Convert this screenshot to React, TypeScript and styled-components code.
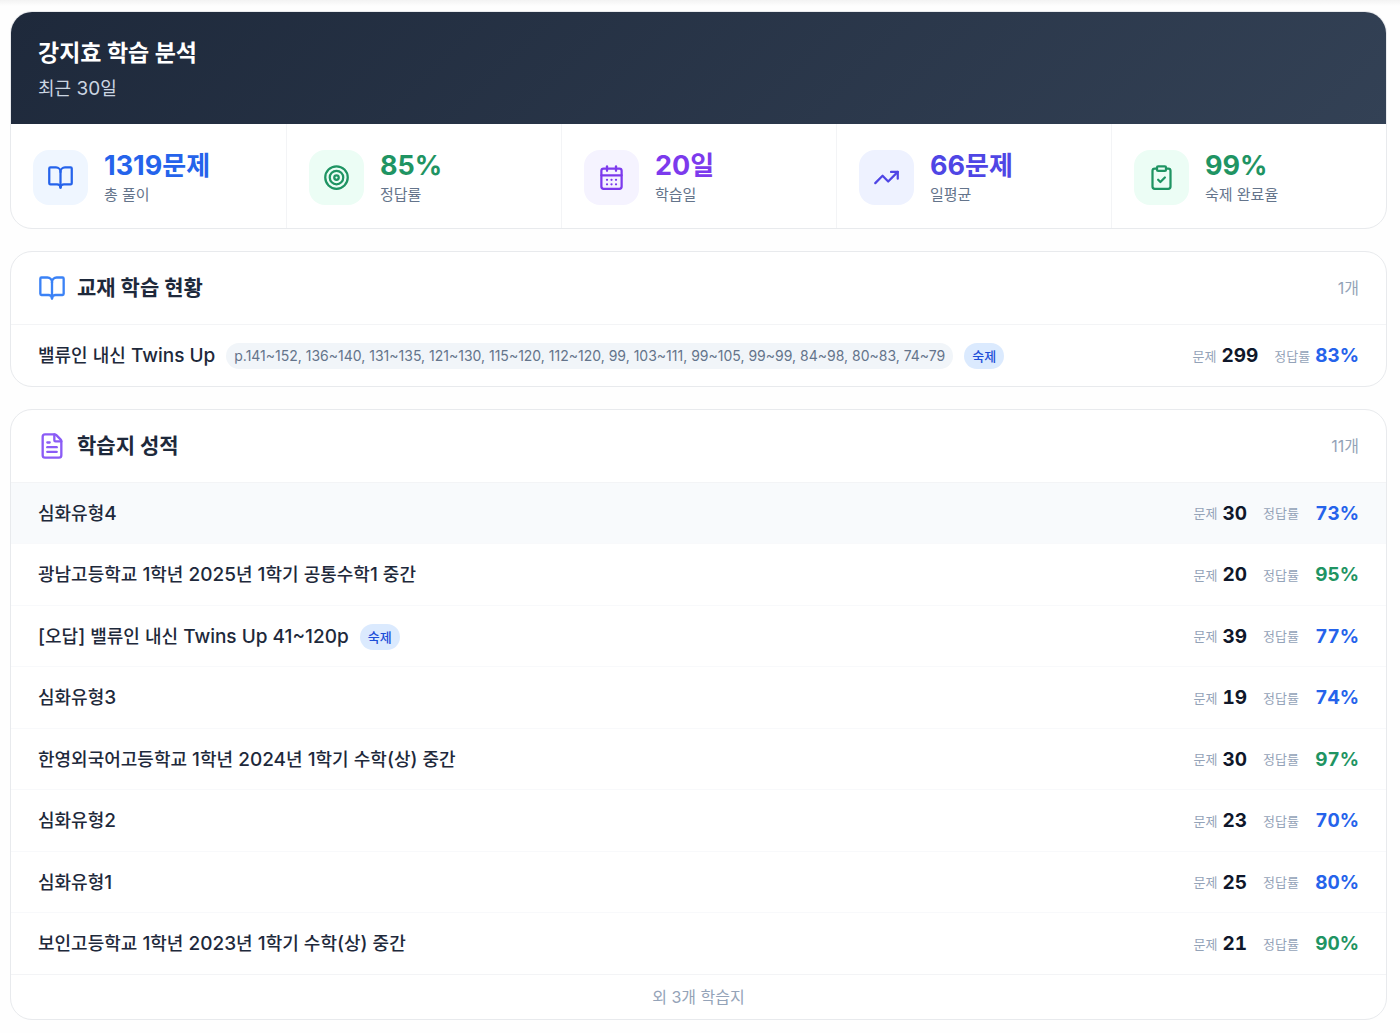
import React from "react";
import styled, { createGlobalStyle } from "styled-components";
import {
  BookOpen,
  CalendarDays,
  ClipboardCheck,
  FileText,
  Target,
  TrendingUp,
  type LucideIcon,
} from "lucide-react";

const color = {
  ink: "#0f172a",
  text: "#1e293b",
  muted: "#64748b",
  faint: "#94a3b8",
  line: "#e8eaed",
  softLine: "#f3f4f6",
  rowLine: "#f8f9fb",
  blue: "#2563eb",
  green: "#1f9463",
  purple: "#7c3aed",
  indigo: "#4f46e5",
};

const GlobalStyle = createGlobalStyle`
  *, *::before, *::after { box-sizing: border-box; }
  body {
    margin: 0;
    background: #fefefe;
    color: ${color.text};
    font-family: Inter, "Noto Sans CJK KR", sans-serif;
    -webkit-font-smoothing: antialiased;
  }
  h1, h2, p, ul, dl, dd { margin: 0; padding: 0; }
  ul { list-style: none; }
`;

const Page = styled.main`
  display: flex;
  flex-direction: column;
  gap: 22px;
  padding: 11px 13px 12px 10px;
  background: linear-gradient(#f3f3f3, #fefefe 6px);
`;

const Card = styled.section`
  overflow: hidden;
  border: 1px solid ${color.line};
  border-radius: 22px;
  background: #fff;
`;

const Hero = styled.header`
  padding: 24px 27px 21px;
  background: linear-gradient(135deg, #1e293b, #334155);
`;

const HeroTitle = styled.h1`
  color: #fff;
  font-size: 23px;
  font-weight: 700;
  line-height: 34px;
`;

const HeroPeriod = styled.p`
  padding-top: 5px;
  color: #cbd5e1;
  font-size: 18px;
  line-height: 28px;
`;

const StatGrid = styled.dl`
  display: grid;
  grid-template-columns: repeat(5, 1fr);
`;

const Stat = styled.div`
  display: flex;
  align-items: center;
  gap: 16px;
  padding: 24px 22px 22px;
  & + & {
    border-left: 1px solid ${color.softLine};
  }
`;

const IconTile = styled.span<{ $fg: string; $bg: string }>`
  display: grid;
  place-items: center;
  width: 55px;
  height: 55px;
  border-radius: 16px;
  color: ${(p) => p.$fg};
  background: ${(p) => p.$bg};
`;

const StatText = styled.div`
  display: flex;
  flex-direction: column-reverse;
`;

const StatLabel = styled.dt`
  color: ${color.muted};
  font-size: 15px;
  line-height: 22px;
`;

const StatValue = styled.dd<{ $fg: string }>`
  color: ${(p) => p.$fg};
  font-size: 27px;
  font-weight: 700;
  line-height: 36px;
`;

const Unit = styled.span`
  font-size: 26px;
`;

const SectionHead = styled.header`
  display: flex;
  align-items: center;
  gap: 11px;
  padding: 20px 27px;
  border-bottom: 1px solid ${color.softLine};
`;

const SectionIcon = styled.span<{ $fg: string }>`
  display: flex;
  color: ${(p) => p.$fg};
`;

const SectionTitle = styled.h2`
  flex: 1;
  color: ${color.text};
  font-size: 21px;
  font-weight: 700;
  line-height: 32px;
`;

const Count = styled.span`
  color: ${color.faint};
  font-size: 16px;
  line-height: 22px;
`;

const Row = styled.li<{ $active?: boolean }>`
  display: flex;
  align-items: center;
  gap: 11px;
  padding: 17px 27px 15px;
  font-size: 19px;
  line-height: 1.5;
  background: ${(p) => (p.$active ? "#f8fafc" : "transparent")};
  & + & {
    border-top: 1px solid ${color.rowLine};
  }
`;

const Name = styled.span`
  font-size: 18px;
  font-weight: 500;
  line-height: 28px;
`;

const Latin = styled.span`
  font-size: 19px;
`;

const Pill = styled.span<{ $homework?: boolean }>`
  padding: 2px 8px;
  border-radius: 13px;
  color: ${(p) => (p.$homework ? "#1d4ed8" : color.muted)};
  background: ${(p) => (p.$homework ? "#dbeafe" : "#f1f5f9")};
  font-size: ${(p) => (p.$homework ? "13px" : "14px")};
  font-weight: ${(p) => (p.$homework ? 500 : 400)};
  line-height: 22px;
`;

const Scores = styled.dl`
  display: flex;
  gap: 16px;
  margin-left: auto;
`;

const Score = styled.div`
  display: flex;
  align-items: center;
  gap: 5px;
`;

const ScoreLabel = styled.dt`
  color: ${color.faint};
  font-size: 13px;
`;

const ScoreValue = styled.dd<{ $fg: string; $column?: boolean }>`
  min-width: ${(p) => (p.$column ? "55px" : "0")};
  color: ${(p) => p.$fg};
  font-weight: 700;
  font-variant-numeric: tabular-nums;
  text-align: right;
`;

const More = styled.p`
  padding: 11px 27px;
  border-top: 1px solid ${color.softLine};
  color: ${color.faint};
  font-size: 16px;
  line-height: 22px;
  text-align: center;
`;

interface StatItem {
  label: string;
  value: string;
  unit?: string;
  icon: LucideIcon;
  fg: string;
  bg: string;
}

const stats: StatItem[] = [
  { label: "총 풀이", value: "1319", unit: "문제", icon: BookOpen, fg: color.blue, bg: "#eff6ff" },
  { label: "정답률", value: "85%", icon: Target, fg: color.green, bg: "#ecfdf5" },
  { label: "학습일", value: "20", unit: "일", icon: CalendarDays, fg: color.purple, bg: "#f5f3ff" },
  { label: "일평균", value: "66", unit: "문제", icon: TrendingUp, fg: color.indigo, bg: "#eef2ff" },
  { label: "숙제 완료율", value: "99%", icon: ClipboardCheck, fg: color.green, bg: "#ecfdf5" },
];

interface Work {
  name: string;
  pages?: string;
  homework?: boolean;
  problems: number;
  rate: number;
}

const books: Work[] = [
  {
    name: "밸류인 내신 Twins Up",
    pages:
      "p.141~152, 136~140, 131~135, 121~130, 115~120, 112~120, 99, 103~111, 99~105, 99~99, 84~98, 80~83, 74~79",
    homework: true,
    problems: 299,
    rate: 83,
  },
];

const sheets: Work[] = [
  { name: "심화유형4", problems: 30, rate: 73 },
  { name: "광남고등학교 1학년 2025년 1학기 공통수학1 중간", problems: 20, rate: 95 },
  { name: "[오답] 밸류인 내신 Twins Up 41~120p", homework: true, problems: 39, rate: 77 },
  { name: "심화유형3", problems: 19, rate: 74 },
  { name: "한영외국어고등학교 1학년 2024년 1학기 수학(상) 중간", problems: 30, rate: 97 },
  { name: "심화유형2", problems: 23, rate: 70 },
  { name: "심화유형1", problems: 25, rate: 80 },
  { name: "보인고등학교 1학년 2023년 1학기 수학(상) 중간", problems: 21, rate: 90 },
];

/* Latin letters and digits look small beside Hangul, so those runs are set one size up. */
function MixedText({ children }: { children: string }) {
  return (
    <>
      {children
        .split(/([ -~]+)/)
        .map((run, i) => (i % 2 ? <Latin key={i}>{run}</Latin> : run))}
    </>
  );
}

function WorkRow({ work, active, column }: { work: Work; active?: boolean; column?: boolean }) {
  return (
    <Row $active={active}>
      <Name>
        <MixedText>{work.name}</MixedText>
      </Name>
      {work.pages && <Pill>{work.pages}</Pill>}
      {work.homework && <Pill $homework>숙제</Pill>}
      <Scores>
        <Score>
          <ScoreLabel>문제</ScoreLabel>
          <ScoreValue $fg={color.ink}>{work.problems}</ScoreValue>
        </Score>
        <Score>
          <ScoreLabel>정답률</ScoreLabel>
          <ScoreValue $fg={work.rate >= 90 ? color.green : color.blue} $column={column}>
            {work.rate}%
          </ScoreValue>
        </Score>
      </Scores>
    </Row>
  );
}

export default function App() {
  return (
    <>
      <GlobalStyle />
      <Page>
        <Card>
          <Hero>
            <HeroTitle>강지효 학습 분석</HeroTitle>
            <HeroPeriod>
              <MixedText>최근 30일</MixedText>
            </HeroPeriod>
          </Hero>
          <StatGrid>
            {stats.map(({ label, value, unit, icon: Icon, fg, bg }) => (
              <Stat key={label}>
                <IconTile $fg={fg} $bg={bg}>
                  <Icon size={27} />
                </IconTile>
                <StatText>
                  <StatLabel>{label}</StatLabel>
                  <StatValue $fg={fg}>
                    {value}
                    {unit && <Unit>{unit}</Unit>}
                  </StatValue>
                </StatText>
              </Stat>
            ))}
          </StatGrid>
        </Card>

        <Card>
          <SectionHead>
            <SectionIcon $fg="#3b82f6">
              <BookOpen size={28} />
            </SectionIcon>
            <SectionTitle>교재 학습 현황</SectionTitle>
            <Count>1개</Count>
          </SectionHead>
          <ul>
            {books.map((book) => (
              <WorkRow key={book.name} work={book} />
            ))}
          </ul>
        </Card>

        <Card>
          <SectionHead>
            <SectionIcon $fg="#8b5cf6">
              <FileText size={28} />
            </SectionIcon>
            <SectionTitle>학습지 성적</SectionTitle>
            <Count>11개</Count>
          </SectionHead>
          <ul>
            {sheets.map((sheet, i) => (
              <WorkRow key={sheet.name} work={sheet} active={i === 0} column />
            ))}
          </ul>
          <More>외 3개 학습지</More>
        </Card>
      </Page>
    </>
  );
}
